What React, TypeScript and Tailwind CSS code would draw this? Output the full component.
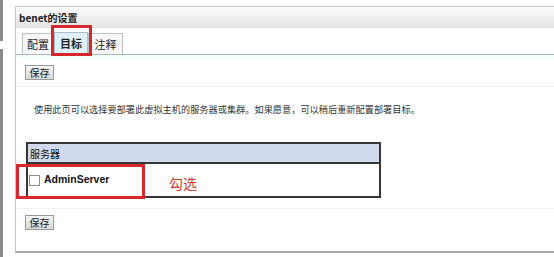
import React from "react";

const cjk = { fontFamily: '"Noto Sans CJK SC", "Liberation Sans", sans-serif' };

function SaveButton() {
  return (
    <button
      className="flex h-[15px] w-[29px] items-center justify-center border border-[#9a9a9a] bg-gradient-to-b from-[#f6f6f6] to-[#d8d8d8] text-[10px] leading-none text-[#222]"
      style={cjk}
    >
      保存
    </button>
  );
}

export default function App() {
  return (
    <div className="relative flex h-[257px] w-[554px] overflow-hidden bg-white">
      {/* left frame edge */}
      <div className="flex w-[3px] flex-col gap-[8px]">
        <div className="h-[41px] bg-[#8a8a8a]" />
        <div className="flex-1 bg-[#8a8a8a]" />
      </div>

      {/* settings panel */}
      <div className="ml-[12px] mt-[6px] flex h-[247px] flex-1 flex-col border-l border-t border-b-2 border-[#c8c8c8] border-b-[#a8a8a8]">
        <div
          className="flex h-[21px] items-center bg-gradient-to-b from-[#fbfbfb] to-[#e4e4e4] pl-[3px] text-[10px] font-bold text-[#222]"
          style={cjk}
        >
          benet的设置
        </div>

        {/* tabs */}
        <div className="relative flex h-[27px] items-end border-b border-[#a7b9b9] pl-[6px]" style={cjk}>
          <div className="flex h-[21px] w-[32px] items-center justify-center border border-b-0 border-[#b8c4c4] bg-[#f7f7f7] text-[11px] text-[#222]">
            配置
          </div>
          <div className="flex h-[22px] w-[34px] items-center justify-center border border-b-0 border-[#a9bfc8] bg-[#def1f8] text-[11px] font-bold text-[#222]">
            目标
          </div>
          <div className="flex h-[21px] w-[35px] items-center justify-center border border-b-0 border-[#b8c4c4] bg-[#f7f7f7] text-[11px] text-[#222]">
            注释
          </div>
          <div className="absolute left-[35px] top-[-3px] h-[31px] w-[41px] border-[3px] border-[#d7262c]" />
        </div>

        {/* content */}
        <div className="flex bg-gradient-to-b from-[#f3fbfb] to-white to-[6px] pl-[9px] pt-[10px]">
          <SaveButton />
        </div>
        <div className="mt-[6px] border-t border-[#ececec]" />
        <div className="pl-[18px] pt-[16px] text-[9.2px] leading-[12px] text-[#333]" style={cjk}>
          使用此页可以选择要部署此虚拟主机的服务器或集群。如果愿意，可以稍后重新配置部署目标。
        </div>

        <div className="relative ml-[10px] mt-[27px] w-[355px] border-2 border-[#363636]">
          <div
            className="flex h-[20px] items-center border-b-2 border-[#363636] bg-[#d0daec] pl-[2px] text-[10px] text-[#111]"
            style={cjk}
          >
            服务器
          </div>
          <div className="flex h-[32px] items-center gap-[4px] pl-[1px]">
            <div className="h-[11px] w-[11px] border border-[#8e8e8e] bg-white" />
            <span className="text-[10.5px] font-bold text-[#111]" style={{ fontFamily: '"Liberation Sans", sans-serif' }}>
              AdminServer
            </span>
          </div>
          <div className="absolute left-[-12px] top-[20px] h-[35px] w-[129px] border-[3px] border-[#d7262c]" />
          <div className="absolute left-[141px] top-[30px] text-[14px] leading-[18px] text-[#d23a2e]" style={cjk}>
            勾选
          </div>
        </div>

        <div className="mt-[10px] border-t border-[#f0f0f0]" />
        <div className="flex pl-[9px] pt-[6px]">
          <SaveButton />
        </div>
      </div>
    </div>
  );
}
